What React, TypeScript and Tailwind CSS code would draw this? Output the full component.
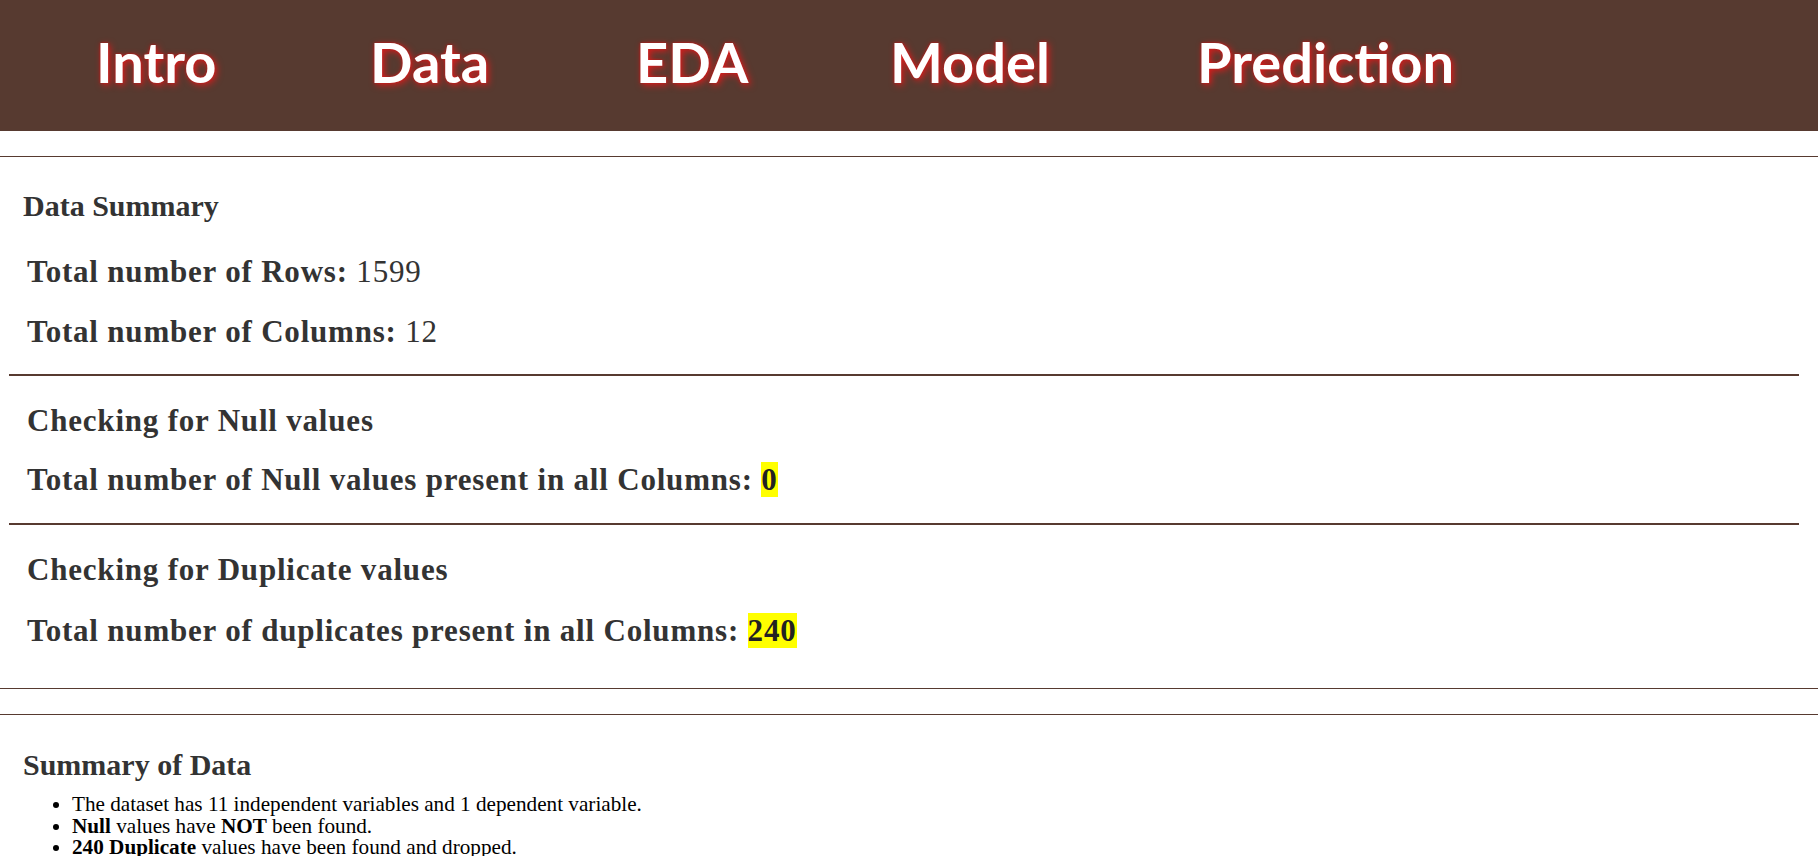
import React from 'react';

// widths keep each label starting where the original menu puts it
const navItems = [
  { label: 'Intro', w: 'w-[274px]' },
  { label: 'Data', w: 'w-[266px]' },
  { label: 'EDA', w: 'w-[254px]' },
  { label: 'Model', w: 'w-[307px]' },
  { label: 'Prediction', w: '' },
];

const headingClass = 'font-bold text-[31px] leading-[36px] text-[#333] tracking-[0.8px]';
const serif = { fontFamily: '"Liberation Serif", "Times New Roman", serif' };

export default function App() {
  return (
    <div className="min-h-screen bg-white" style={serif}>
      {/* top nav */}
      <header className="h-[131px] bg-[#573a30] flex items-center pl-[96px] pb-[8px]">
        <nav className="flex">
          {navItems.map((item) => (
            <div key={item.label} className={item.w}>
              <a
                href="#"
                className="text-white text-[56px] font-bold leading-none [text-shadow:2px_2px_7px_#e01c1c,0_0_3px_#b81010]"
                style={{ fontFamily: 'Lato, "Open Sans", sans-serif' }}
              >
                {item.label}
              </a>
            </div>
          ))}
        </nav>
      </header>

      <div className="mt-[25px] h-px bg-[#573a30]" />

      {/* data summary */}
      <section className="pb-[24px]">
        <h3 className="ml-[23px] mt-[31px] font-bold text-[30px] leading-[36px] text-[#333]">Data Summary</h3>
        <p className={`ml-[27px] mt-[30px] ${headingClass}`}>
          Total number of Rows: <span className="font-normal">1599</span>
        </p>
        <p className={`ml-[27px] mt-[24px] ${headingClass}`}>
          Total number of Columns: <span className="font-normal">12</span>
        </p>
      </section>

      <div className="mx-[9px] w-[1790px] h-[2px] bg-[#573a30]" />

      <section className="pb-[25px]">
        <h3 className={`ml-[27px] mt-[27px] ${headingClass}`}>Checking for Null values</h3>
        <p className={`ml-[27px] mt-[23px] ${headingClass}`}>
          Total number of Null values present in all Columns: <span className="bg-[#ffff00] text-[#222]">0</span>
        </p>
      </section>

      <div className="mx-[9px] w-[1790px] h-[2px] bg-[#573a30]" />

      <section className="pb-[39px]">
        <h3 className={`ml-[27px] mt-[27px] ${headingClass}`}>Checking for Duplicate values</h3>
        <p className={`ml-[27px] mt-[25px] ${headingClass}`}>
          Total number of duplicates present in all Columns: <span className="bg-[#ffff00] text-[#222]">240</span>
        </p>
      </section>

      <div className="h-px bg-[#573a30]" />
      <div className="mt-[25px] h-px bg-[#573a30]" />

      {/* summary */}
      <section className="pb-10">
        <h3 className="ml-[23px] mt-[32px] font-bold text-[30px] leading-[36px] text-[#333]">Summary of Data</h3>
        <ul className="mt-[11px] ml-[72px] list-disc text-[21.2px] leading-[21.5px] text-black">
          <li>The dataset has 11 independent variables and 1 dependent variable.</li>
          <li>
            <b>Null</b> values have <b>NOT</b> been found.
          </li>
          <li>
            <b>240 Duplicate</b> values have been found and dropped.
          </li>
        </ul>
      </section>
    </div>
  );
}
